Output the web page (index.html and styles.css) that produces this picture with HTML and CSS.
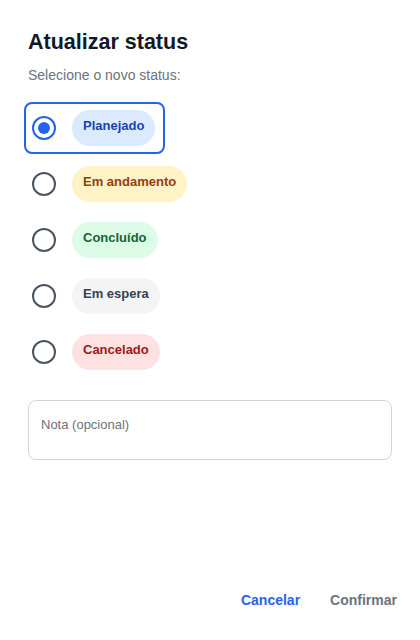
FILE: index.html
```html
<!DOCTYPE html>
<html lang="pt">
<head>
    <meta charset="UTF-8">
    <meta name="viewport" content="width=device-width, initial-scale=1.0">
    <title>Atualizar status</title>
    <link rel="stylesheet" href="styles.css">
</head>
<body>
    <div class="dialog">
        <h1 class="dialog-title">Atualizar status</h1>
        <p class="dialog-subtitle">Selecione o novo status:</p>

        <!-- Lista de status -->
        <div class="status-list">
            <label class="status-row selected">
                <span class="radio checked"></span>
                <span class="pill pill-planned">Planejado</span>
            </label>
            <label class="status-row">
                <span class="radio"></span>
                <span class="pill pill-progress">Em andamento</span>
            </label>
            <label class="status-row">
                <span class="radio"></span>
                <span class="pill pill-done">Concluído</span>
            </label>
            <label class="status-row">
                <span class="radio"></span>
                <span class="pill pill-waiting">Em espera</span>
            </label>
            <label class="status-row">
                <span class="radio"></span>
                <span class="pill pill-cancelled">Cancelado</span>
            </label>
        </div>

        <textarea class="note" placeholder="Nota (opcional)"></textarea>

        <div class="dialog-actions">
            <button class="btn btn-cancel">Cancelar</button>
            <button class="btn btn-confirm">Confirmar</button>
        </div>
    </div>
</body>
</html>
```

FILE: styles.css
```css
/* Style global */
body {
    font-family: "Liberation Sans", Arial, sans-serif;
    margin: 0;
    padding: 0;
    background-color: white;
}

.dialog {
    display: flex;
    flex-direction: column;
    min-height: 640px;
    box-sizing: border-box;
    padding: 28px 15px 22px 28px;
}

.dialog-title {
    margin: 0;
    font-size: 21.5px;
    line-height: 28px;
    font-weight: bold;
    color: #111827;
}

.dialog-subtitle {
    margin: 9px 0 0;
    font-size: 14px;
    line-height: 20px;
    color: #6b7280;
}

.status-list {
    display: flex;
    flex-direction: column;
    align-items: flex-start;
    gap: 4px;
    margin: 17px 0 0 -4px;
}

.status-row {
    display: flex;
    align-items: center;
    gap: 16px;
    padding: 6px 8px 6px 6px;
    border: 2px solid transparent;
    border-radius: 8px;
    cursor: pointer;
}

.status-row.selected {
    border-color: #2563eb;
}

.radio {
    width: 20px;
    height: 20px;
    border: 2px solid #4b5563;
    border-radius: 50%;
    display: flex;
    align-items: center;
    justify-content: center;
}

.radio.checked {
    border-color: #2563eb;
}

.radio.checked::after {
    content: "";
    width: 12px;
    height: 12px;
    border-radius: 50%;
    background-color: #2563eb;
}

.pill {
    box-sizing: border-box;
    height: 36px;
    line-height: 31px;
    padding: 0 11px 5px;
    border-radius: 18px;
    font-size: 13px;
    font-weight: bold;
}

.pill-planned { background-color: #dbeafe; color: #1e40af; }
.pill-progress { background-color: #fef3c7; color: #92400e; }
.pill-done { background-color: #dcfce7; color: #166534; }
.pill-waiting { background-color: #f3f4f6; color: #374151; }
.pill-cancelled { background-color: #fee2e2; color: #991b1b; }

.note {
    display: block;
    box-sizing: border-box;
    width: 364px;
    height: 60px;
    margin-top: 22px;
    padding: 16px 12px 10px;
    border: 1px solid #d1d5db;
    border-radius: 8px;
    font-family: inherit;
    font-size: 13px;
    color: #111827;
    resize: none;
}

.note::placeholder {
    color: #6b7280;
}

.dialog-actions {
    margin-top: auto;
    display: flex;
    justify-content: flex-end;
    gap: 14px;
}

.btn {
    height: 36px;
    padding: 0 8px;
    border: none;
    background: none;
    font-family: inherit;
    font-size: 14px;
    font-weight: bold;
    cursor: pointer;
}

.btn-cancel { color: #2563eb; }
.btn-confirm { color: #6b7280; }
```
